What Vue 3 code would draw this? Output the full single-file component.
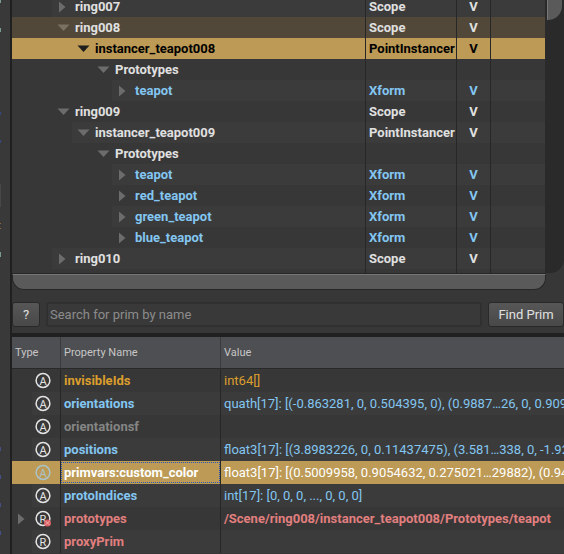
<script setup>
import { ref } from 'vue'

const prims = [
  { name: 'ring007', type: 'Scope', level: 0 },
  { name: 'ring008', type: 'Scope', level: 0, open: true, state: 'ancestor' },
  { name: 'instancer_teapot008', type: 'PointInstancer', level: 1, open: true, state: 'selected' },
  { name: 'Prototypes', type: '', level: 2, open: true },
  { name: 'teapot', type: 'Xform', level: 3 },
  { name: 'ring009', type: 'Scope', level: 0, open: true },
  { name: 'instancer_teapot009', type: 'PointInstancer', level: 1, open: true },
  { name: 'Prototypes', type: '', level: 2, open: true },
  { name: 'teapot', type: 'Xform', level: 3 },
  { name: 'red_teapot', type: 'Xform', level: 3 },
  { name: 'green_teapot', type: 'Xform', level: 3 },
  { name: 'blue_teapot', type: 'Xform', level: 3 },
  { name: 'ring010', type: 'Scope', level: 0 },
]

const properties = [
  { kind: 'A', name: 'invisibleIds', value: 'int64[]', tone: 'orange' },
  { kind: 'A', name: 'orientations', value: 'quath[17]: [(-0.863281, 0, 0.504395, 0), (0.9887…26, 0, 0.90918', tone: 'blue' },
  { kind: 'A', name: 'orientationsf', value: '', tone: 'muted' },
  { kind: 'A', name: 'positions', value: 'float3[17]: [(3.8983226, 0, 0.11437475), (3.581…338, 0, -1.926', tone: 'blue' },
  { kind: 'A', name: 'primvars:custom_color', value: 'float3[17]: [(0.5009958, 0.9054632, 0.275021…29882), (0.9408', tone: 'selected' },
  { kind: 'A', name: 'protoIndices', value: 'int[17]: [0, 0, 0, ..., 0, 0, 0]', tone: 'blue' },
  { kind: 'R', name: 'prototypes', value: '/Scene/ring008/instancer_teapot008/Prototypes/teapot', tone: 'red', branch: true, target: true },
  { kind: 'R', name: 'proxyPrim', value: '', tone: 'red' },
]

const query = ref('')
</script>

<template>
  <div class="window">
    <div class="gutter"></div>
    <main class="panels">
      <section class="browser">
        <div class="tree-area">
          <div class="tree-view">
            <table class="tree" aria-label="Prims">
              <colgroup>
                <col />
                <col class="col-type" />
                <col class="col-vis" />
                <col class="col-rest" />
              </colgroup>
              <tbody>
                <tr v-for="(prim, i) in prims" :key="i" :class="[prim.state, { xform: prim.type === 'Xform' }]">
                  <td class="name-cell">
                    <div class="name" :class="'level-' + prim.level">
                      <svg class="arrow" width="14" height="12" viewBox="0 0 14 12" aria-hidden="true">
                        <path v-if="prim.open" d="M0.500 2.500H12.500L6.500 9Z" />
                        <path v-else d="M2 0.500L8.500 6L2 11.500Z" />
                      </svg>
                      <span>{{ prim.name }}</span>
                    </div>
                  </td>
                  <td>{{ prim.type }}</td>
                  <td class="vis">{{ prim.type ? 'V' : '' }}</td>
                  <td></td>
                </tr>
                <tr class="stub"><td></td><td></td><td></td><td></td></tr>
              </tbody>
            </table>
          </div>
          <div class="v-track"><div class="v-thumb"></div></div>
        </div>
        <div class="h-track"><div class="h-thumb"></div></div>
        <form class="search" @submit.prevent>
          <button type="button" class="help">?</button>
          <input v-model="query" type="text" aria-label="Search for prim by name" placeholder="Search for prim by name" />
          <button type="submit" class="find">Find Prim</button>
        </form>
      </section>
      <section class="inspector">
        <table class="props">
          <colgroup>
            <col class="col-kind" />
            <col class="col-prop" />
            <col />
          </colgroup>
          <thead>
            <tr><th>Type</th><th>Property Name</th><th>Value</th></tr>
          </thead>
          <tbody>
            <tr v-for="prop in properties" :key="prop.name" :class="prop.tone">
              <td class="kind-cell">
                <div class="kind">
                  <span class="branch">
                    <svg v-if="prop.branch" class="arrow" width="14" height="12" viewBox="0 0 14 12" aria-hidden="true">
                      <path d="M2 0.500L8.500 6L2 11.500Z" />
                    </svg>
                  </span>
                  <svg class="badge" width="18" height="18" viewBox="0 0 18 18">
                    <circle cx="9" cy="8.500" r="6.900" />
                    <text x="9" y="12.500" text-anchor="middle">{{ prop.kind }}</text>
                    <g v-if="prop.target" class="target">
                      <circle cx="13.500" cy="13" r="3.500" />
                      <path d="M11.500 11L15.500 15M15.500 11L11.500 15" />
                    </g>
                  </svg>
                </div>
              </td>
              <td class="prop-name"><div class="focus">{{ prop.name }}</div></td>
              <td class="value">{{ prop.value }}</td>
            </tr>
          </tbody>
        </table>
      </section>
    </main>
  </div>
</template>

<style>
body {
  margin: 0;
  background: #373737;
}
</style>

<style scoped>
.window {
  display: flex;
  min-height: 100vh;
  overflow: hidden;
  background: #373737;
  color: #e0e0e0;
  font-family: Roboto, "Liberation Sans", sans-serif;
  font-size: 13px;
}
.gutter {
  flex: none;
  width: 10px;
  border-right: 2px solid #202020;
  background:
    linear-gradient(#7d9c90 0 3px, transparent 3px 28px, #7d9c90 28px 32px, transparent 32px 112px,
      #34477e 112px 115px, transparent 115px 140px, #34477e 140px 143px, transparent 143px 184px,
      #484848 184px 207px, transparent 207px 223px, #8b6936 223px 224px, transparent 224px 228px,
      #8b6936 228px 229px, transparent 229px 252px, #7d9c90 252px 257px, transparent 257px 447px,
      #454f83 447px 451px, transparent 451px 475px, #454f83 475px 479px, transparent 479px 503px,
      #454f83 503px 507px, transparent 507px 531px, #454f83 531px 535px, transparent 535px) 0 0 / 1px 100% no-repeat,
    #393939;
}
.panels {
  flex: 1;
  min-width: 0;
}
table {
  width: 100%;
  table-layout: fixed;
  border-collapse: separate;
  border-spacing: 0;
}
td,
th {
  padding: 0 0 0 3px;
  overflow: hidden;
  white-space: nowrap;
  text-align: left;
}

/* Prim tree */
.tree-area {
  display: flex;
}
.tree-view {
  flex: 1;
  min-width: 0;
  overflow: hidden;
}
.tree {
  margin-top: -4px;
  font-weight: 700;
}
.col-type {
  width: 91px;
}
.col-vis {
  width: 34px;
}
.col-rest {
  width: 55px;
}
.tree td {
  height: 21px;
  line-height: 21px;
}
.tree td + td {
  border-left: 1px solid #272727;
}
.tree .name-cell {
  padding: 0 0 0 40px;
}
.tree .vis {
  padding: 0;
  text-align: center;
}
.name {
  display: flex;
  align-items: center;
  gap: 4px;
  padding-left: 5px;
}
.level-1 {
  margin-left: 20px;
}
.level-2 {
  margin-left: 40px;
}
.level-3 {
  margin-left: 60px;
}
.arrow {
  flex: none;
  fill: #6c6c6c;
}
.tree tr:nth-child(odd) td:not(.name-cell),
.tree tr:nth-child(odd) .name {
  background: #3b3b3b;
}
.tree .xform {
  color: #83c6f1;
}
.tree tbody tr.ancestor td:nth-child(n),
.tree tbody tr.ancestor .name {
  background: #51483a;
}
.ancestor .arrow {
  fill: #7b7163;
}
.tree tbody tr.selected td:nth-child(n),
.tree tbody tr.selected td .name {
  background: #bd9a55;
  color: #000;
}
.selected .arrow {
  fill: #1d1d1d;
}
.tree .stub td {
  height: 4px;
  line-height: 4px;
}
.v-track {
  flex: none;
  width: 16px;
  padding: 0 1px 0 2px;
  background: #2a2a2a;
  border-radius: 0 0 14px 0;
}
.v-thumb {
  box-sizing: border-box;
  width: 15px;
  height: 20px;
  border-left: 1px solid #777;
  border-radius: 0 0 14px 0;
  background: #5a5a5a;
}
.h-track {
  margin-right: 18px;
  border-top: 1px solid #272727;
}
.h-thumb {
  height: 14px;
  border: 1px solid #272727;
  border-top-color: #777;
  border-radius: 0 0 12px 12px;
  background: #5a5a5a;
}

/* Search bar */
.search {
  display: flex;
  align-items: center;
  gap: 6px;
  padding: 12px 0 6px;
}
.search button,
.search input {
  box-sizing: border-box;
  height: 25px;
  margin: 0;
  font: inherit;
  border: 1px solid #292929;
  border-radius: 3px;
}
.search button {
  flex: none;
  padding: 0;
  color: #e0e0e0;
  background: linear-gradient(#575757, #484848);
}
.search .help {
  width: 28px;
}
.search .find {
  width: 76px;
}
.search input {
  flex: 1;
  min-width: 0;
  padding: 0 2px;
  border: 2px solid #303030;
  color: #e0e0e0;
  background: #393939;
  outline: none;
}
.search input::placeholder {
  color: #8c8c8c;
  opacity: 1;
}

/* Property table */
.inspector {
  border-top: 4px solid #202020;
}
.col-kind {
  width: 48px;
}
.col-prop {
  width: 160px;
}
.props th {
  height: 31px;
  border-bottom: 1px solid #292929;
  background: #4e4f52;
  color: #c6c6c6;
  font-size: 11px;
  font-weight: 400;
}
.props th + th {
  border-left: 1px solid #3b3b3d;
}
.props td {
  height: 23px;
  line-height: 23px;
}
.props td + td {
  border-left: 1px solid #272727;
}
.props .kind-cell {
  padding: 0;
}
.kind {
  display: flex;
  align-items: center;
  height: 23px;
}
.branch {
  display: flex;
  width: 16px;
  padding-left: 4px;
}
.props tbody tr:nth-child(even) td {
  background: #3b3b3b;
}
.props tbody tr:nth-child(even) .kind-cell {
  background: linear-gradient(90deg, #373737 20px, #3b3b3b 20px);
}
.badge {
  margin-left: 2px;
  fill: none;
  stroke: #e4e4e4;
  stroke-width: 1.5;
}
.badge text {
  fill: #e4e4e4;
  stroke: none;
  font-size: 11px;
}
.badge .target {
  fill: #d95c60;
  stroke: none;
}
.badge .target path {
  stroke: #f0b5b5;
  stroke-width: 1;
}
.props .prop-name {
  padding: 0;
  font-weight: 700;
}
.focus {
  box-sizing: border-box;
  height: 21px;
  border: 1px dotted transparent;
  padding-left: 2px;
  line-height: 19px;
}
.orange {
  color: #dc9e2c;
}
.blue {
  color: #83c6f1;
}
.muted {
  color: #858585;
}
.red {
  color: #e17f7f;
}
.red .value {
  font-weight: 700;
}
.props tbody tr.selected td {
  background: #bd9a55;
  color: #fff;
}
.selected .focus {
  border-color: #2456b8;
}
.selected .badge {
  stroke: #a9c3c9;
}
.selected .badge text {
  fill: #a9c3c9;
}
</style>
